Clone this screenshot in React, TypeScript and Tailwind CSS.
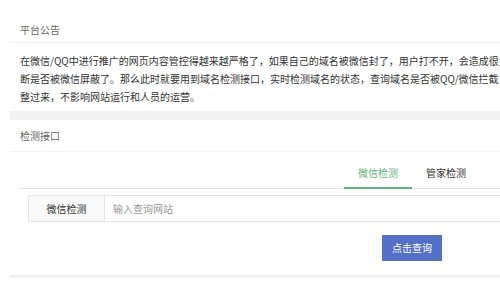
import React from "react";

const font = { fontFamily: '"Noto Sans CJK SC", "Noto Sans", sans-serif' };

// 平台公告正文（原页面比窗口宽，右侧被截断）
const noticeLines = [
  "在微信/QQ中进行推广的网页内容管控得越来越严格了，如果自己的域名被微信封了，用户打不开，会造成很大的损失，所以需要及时判",
  "断是否被微信屏蔽了。那么此时就要用到域名检测接口，实时检测域名的状态，查询域名是否被QQ/微信拦截，被拦截后也能及时调",
  "整过来，不影响网站运行和人员的运营。",
];

const App: React.FC = () => {
  return (
    <div className="w-[500px] h-[282px] overflow-hidden bg-white" style={font}>
      <div className="w-[700px] pl-[10px]">
        {/* 平台公告 */}
        <div className="bg-white">
          <div className="h-[43px] pt-[22px] px-[10px] text-[10px] leading-[16px] text-[#666] border-b border-[#f3f3f3]">
            平台公告
          </div>
          <div className="px-[10px] pt-[9px] pb-[5px] text-[10px] leading-[18px] text-[#333]">
            {noticeLines.map((line, i) => (
              <div key={i} className="whitespace-nowrap">
                {line}
              </div>
            ))}
          </div>
        </div>

        <div className="h-[9px] bg-[#f2f2f2]" />

        {/* 检测接口 */}
        <div className="bg-white">
          <div className="h-[32px] pt-[7px] px-[10px] text-[10px] leading-[18px] text-[#666] border-b border-[#f3f3f3]">
            检测接口
          </div>
          <div className="px-[10px]">
            <div className="mt-[2px] flex pl-[324px] border-b border-[#e6e6e6]">
              <div className="relative w-[68px] h-[34px] pt-[4px] leading-[30px] text-center text-[10px] text-[#5fb878]">
                微信检测
                <span className="absolute left-0 right-0 -bottom-px h-[2px] bg-[#5fb878]" />
              </div>
              <div className="w-[68px] h-[34px] pt-[4px] leading-[30px] text-center text-[10px] text-[#333]">
                管家检测
              </div>
            </div>

            <div className="mt-[6px] pl-[8px] flex h-[27px]">
              <div className="w-[77px] flex items-center justify-center border border-[#e6e6e6] bg-[#fafafa] text-[10px] text-[#333]">
                微信检测
              </div>
              <input
                className="flex-1 border border-l-0 border-[#e6e6e6] px-[8px] text-[10px] text-[#333] placeholder:text-[#999] outline-none"
                placeholder="输入查询网站"
                style={font}
              />
            </div>

            <div className="pl-[362px] pt-[11px] pb-[14px]">
              <button
                className="w-[60px] h-[26px] bg-[#5470c6] text-white text-[10px]"
                style={font}
              >
                点击查询
              </button>
            </div>
          </div>
        </div>

        <div className="h-[3px] bg-[#f2f2f2]" />
        <div className="h-[20px] bg-white" />
      </div>
    </div>
  );
};

export default App;
